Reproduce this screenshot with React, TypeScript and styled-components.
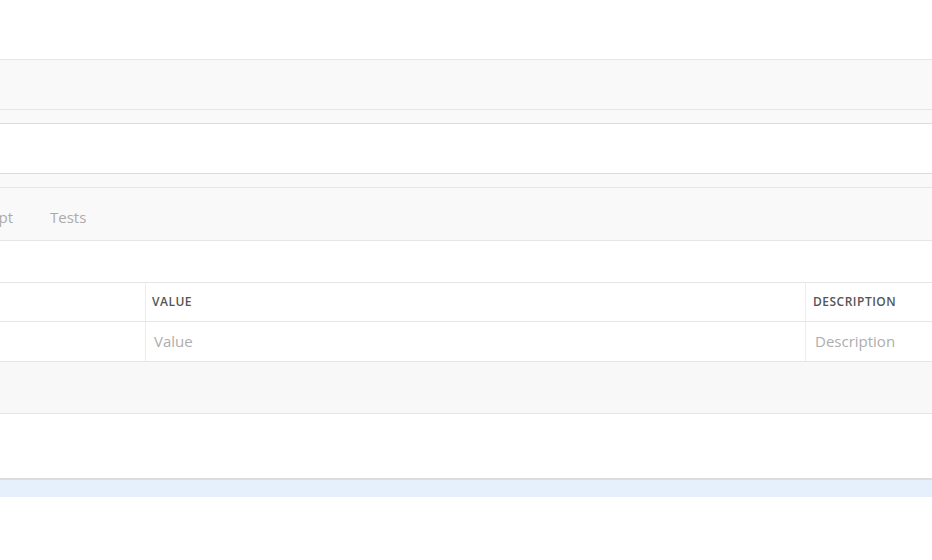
import styled, { createGlobalStyle } from "styled-components";

const GlobalStyle = createGlobalStyle`
  html, body {
    margin: 0;
    padding: 0;
    background: #ffffff;
    font-family: "Open Sans", "Liberation Sans", sans-serif;
  }
`;

const Page = styled.div`
  width: 932px;
  overflow: hidden;
  padding-top: 59px;
`;

const Bar = styled.div<{ $height: number; $bg?: string; $line?: string }>`
  height: ${(p) => p.$height}px;
  background: ${(p) => p.$bg ?? "#f9f9f9"};
  border-top: 1px solid ${(p) => p.$line ?? "#e6e6e6"};
`;

const TabBar = styled.div`
  height: 53px;
  background: #f9f9f9;
  border-top: 1px solid #e6e6e6;
  display: flex;
  align-items: center;
  gap: 37px;
  padding-top: 5px;
  box-sizing: border-box;
`;

const ClippedTab = styled.div`
  width: 13px;
  overflow: hidden;
  display: flex;
  justify-content: flex-end;
`;

const Tab = styled.span`
  font-size: 15px;
  color: #ababab;
  white-space: nowrap;
`;

const Table = styled.div`
  border-top: 1px solid #e6e6e6;
`;

const Row = styled.div<{ $height: number }>`
  display: grid;
  grid-template-columns: 145px 660px 1fr;
  height: ${(p) => p.$height}px;
  border-bottom: 1px solid #e6e6e6;
`;

const Cell = styled.div<{ $pad: number }>`
  display: flex;
  align-items: center;
  padding-left: ${(p) => p.$pad}px;
  padding-bottom: 1px;
  border-left: 1px solid #ececec;
  white-space: nowrap;
  overflow: hidden;
  &:first-child {
    border-left: none;
  }
`;

const HeadText = styled.span`
  font-size: 12px;
  font-weight: 600;
  letter-spacing: 0.5px;
  color: #555555;
`;

const Placeholder = styled.span`
  font-size: 15px;
  color: #adadad;
`;

const Footer = styled.div`
  height: 51px;
  background: #f8f8f8;
`;

const Blank = styled.div`
  height: 64px;
  border-top: 1px solid #e6e6e6;
`;

const Status = styled.div`
  height: 17px;
  background: #e6f0fc;
  border-top: 2px solid #dcdcdc;
`;

export default function App() {
  return (
    <>
      <GlobalStyle />
      <Page>
        <Bar $height={49} />
        <Bar $height={13} />
        <Bar $height={49} $bg="#ffffff" $line="#dcdcdc" />
        <Bar $height={13} $line="#dcdcdc" />
        <TabBar>
          <ClippedTab>
            <Tab>Pre-request Script</Tab>
          </ClippedTab>
          <Tab>Tests</Tab>
        </TabBar>
        <Bar $height={41} $bg="#ffffff" />
        <Table>
          <Row $height={38}>
            <Cell $pad={7} />
            <Cell $pad={6}>
              <HeadText>VALUE</HeadText>
            </Cell>
            <Cell $pad={7}>
              <HeadText>DESCRIPTION</HeadText>
            </Cell>
          </Row>
          <Row $height={39}>
            <Cell $pad={8} />
            <Cell $pad={8}>
              <Placeholder>Value</Placeholder>
            </Cell>
            <Cell $pad={9}>
              <Placeholder>Description</Placeholder>
            </Cell>
          </Row>
        </Table>
        <Footer />
        <Blank />
        <Status />
      </Page>
    </>
  );
}
